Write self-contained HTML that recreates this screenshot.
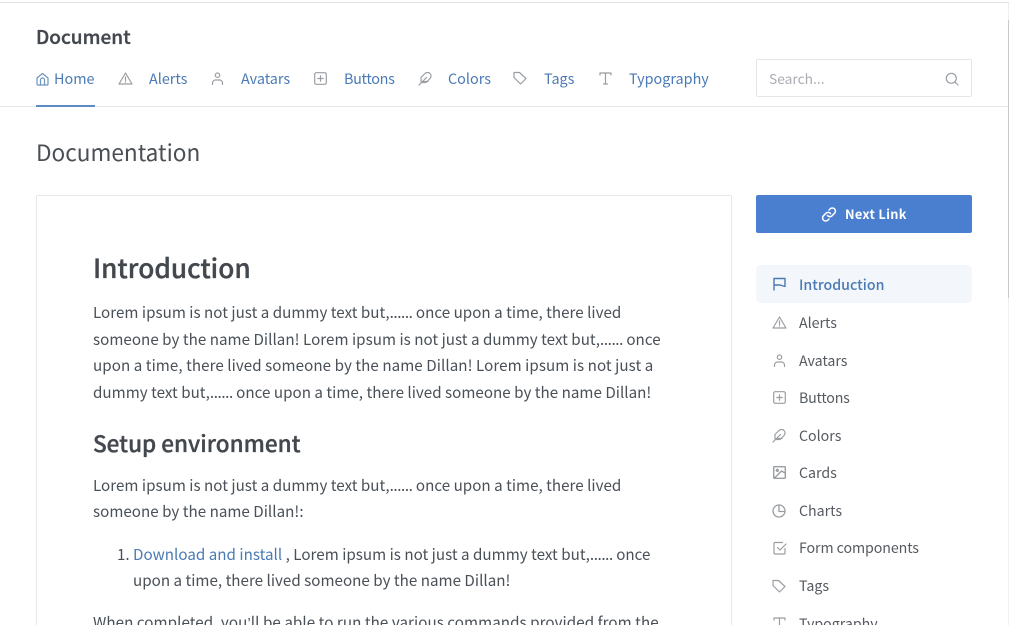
<!DOCTYPE html>
<html style="height:625px;overflow:hidden"><head><meta charset="utf-8"><style>
html,body{margin:0;padding:0;background:#fff;}
body{width:1009px;height:625px;overflow:hidden;position:relative;font-family:"Noto Sans CJK SC","Liberation Sans",sans-serif;color:#4a4f55;}
#w{position:absolute;left:0;top:0;width:1009px;height:625px;overflow:hidden;}
.t{position:absolute;white-space:nowrap;line-height:24px;height:24px;}
.b{font-size:15.15px;color:#495057;letter-spacing:.03px;}
.d{letter-spacing:-.4px;}
.n{font-size:14.4px;color:#4a7ab5;}
.s{font-size:14.2px;color:#555a60;}
.h{-webkit-text-stroke:.35px currentColor;}
svg{position:absolute;fill:none;stroke:#9a9ea3;stroke-width:1.2;stroke-linecap:round;stroke-linejoin:round;}
.r{position:absolute;}
</style></head><body><div id="w">
<div class="r" style="left:0;top:2px;width:1009px;height:1px;background:#e3e3e3"></div>
<div class="r" style="left:0;top:106px;width:1008px;height:1px;background:#e6e8ea"></div>
<div class="r" style="left:36px;top:105px;width:59px;height:2px;background:#5b8bc0"></div>
<div class="r" style="left:1008px;top:3px;width:1px;height:622px;background:#efefef"></div>
<div class="r" style="left:1008px;top:20px;width:1px;height:278px;background:#c8c8c8"></div>

<div class="t h" style="left:36px;top:25px;font-size:19px;font-weight:500;color:#43484e">Document</div>

<svg style="left:36px;top:72px;stroke:#6f94bd" width="13" height="14" viewBox="0 0 13 14"><path d="M1 6l5.500-4.500L12 6v6a1 1 0 0 1-1 1H2a1 1 0 0 1-1-1z"/><path d="M4.500 13V8a2 2 0 0 1 4 0v5"/></svg>
<div class="t n" style="left:54px;top:67px">Home</div>
<svg style="left:118px;top:72px" width="15" height="13" viewBox="0 0 15 13"><path d="M7.500 1L14 12H1z"/><path d="M7.500 5v3.500M7.500 10v.3"/></svg>
<div class="t n" style="left:149px;top:67px">Alerts</div>
<svg style="left:211px;top:72px" width="13" height="13" viewBox="0 0 13 13"><circle cx="6.500" cy="3.200" r="2.200"/><path d="M1.500 12.500v-1.500a3 3 0 0 1 3-3h4a3 3 0 0 1 3 3v1.500"/></svg>
<div class="t n" style="left:241px;top:67px">Avatars</div>
<svg style="left:314px;top:72px" width="13" height="13" viewBox="0 0 13 13"><rect x=".7" y=".7" width="11.600" height="11.600" rx="1.500"/><path d="M6.500 3.800v5.400M3.800 6.500h5.400"/></svg>
<div class="t n" style="left:344px;top:67px;letter-spacing:-.32px">Buttons</div>
<svg style="left:418px;top:72px" width="14" height="14" viewBox="0 0 14 14"><path d="M12 6.500a3.500 3.500 0 0 0-5-5L3 5.500V10.500h5zM1 13L8.500 5.500M5 9.500h5"/></svg>
<div class="t n" style="left:448px;top:67px">Colors</div>
<svg style="left:513px;top:71px" width="14" height="14" viewBox="0 0 14 14"><path d="M1 1.500h5.500L13 7.500 7.500 13 1 6.500z"/></svg>
<div class="t n" style="left:544px;top:67px">Tags</div>
<svg style="left:599px;top:72px" width="13" height="13" viewBox="0 0 13 13"><path d="M1 3V1h11v2M6.500 1v11M4.500 12h4"/></svg>
<div class="t n" style="left:629px;top:67px">Typography</div>

<div class="r" style="left:756px;top:59px;width:214px;height:36px;border:1px solid #e4e6e8;border-radius:2px"></div>
<div class="t" style="left:769px;top:66px;font-size:13.8px;color:#a9adb2">Search...</div>
<svg style="left:945px;top:72px" width="14" height="14" viewBox="0 0 14 14"><circle cx="6.300" cy="6.300" r="5"/><path d="M10 10l3 3"/></svg>

<div class="t" style="left:36px;top:137px;height:30px;line-height:30px;font-size:22.6px;color:#4a4f55">Documentation</div>

<div class="r" style="left:36px;top:195px;width:694px;height:440px;border:1px solid #e6e8ea;border-radius:2px"></div>

<div class="t h" style="left:93px;top:249px;height:36px;line-height:36px;font-size:26.2px;font-weight:500;color:#43484e">Introduction</div>
<div class="t b" style="left:93px;top:300px">Lorem ipsum is not just a dummy text but,<span class="d">......</span> once upon a time, there lived</div>
<div class="t b" style="left:93px;top:327px;letter-spacing:.04px">someone by the name Dillan! Lorem ipsum is not just a dummy text but,<span class="d">......</span> once</div>
<div class="t b" style="left:93px;top:353px;letter-spacing:.07px">upon a time, there lived someone by the name Dillan! Lorem ipsum is not just a</div>
<div class="t b" style="left:93px;top:380px">dummy text but,<span class="d">......</span> once upon a time, there lived someone by the name Dillan!</div>
<div class="t h" style="left:93px;top:427px;height:32px;line-height:32px;font-size:22.5px;font-weight:500;color:#43484e">Setup environment</div>
<div class="t b" style="left:93px;top:473px">Lorem ipsum is not just a dummy text but,<span class="d">......</span> once upon a time, there lived</div>
<div class="t b" style="left:93px;top:499px">someone by the name Dillan!:</div>
<div class="t b" style="left:117px;top:542px">1.</div>
<div class="t b" style="left:133px;top:542px"><span style="color:#4a7ab5">Download and install</span> , Lorem ipsum is not just a dummy text but,<span class="d">......</span> once</div>
<div class="t b" style="left:133px;top:568px;letter-spacing:.03px">upon a time, there lived someone by the name Dillan!</div>
<div class="t b" style="left:93px;top:610px;letter-spacing:.07px">When completed, you<span style="font-family:'Liberation Sans',sans-serif">’</span>ll be able to run the various commands provided from the</div>

<div class="r" style="left:756px;top:195px;width:216px;height:38px;background:#4a7fd0;border-radius:2px"></div>
<svg style="left:821px;top:207px;stroke:#fff;stroke-width:1.500" width="16" height="15" viewBox="0 0 16 15"><path d="M6.500 8.500a3 3 0 0 0 4.500.3l2.500-2.500a3.100 3.100 0 0 0-4.400-4.400L8 3"/><path d="M9.500 6.500a3 3 0 0 0-4.500-.3L2.500 8.700a3.100 3.100 0 0 0 4.400 4.400L8 12"/></svg>
<div class="t" style="left:845px;top:202px;font-size:12.8px;font-weight:700;letter-spacing:.3px;color:#fff">Next Link</div>

<div class="r" style="left:756px;top:265px;width:216px;height:38px;background:#f3f6fa;border-radius:4px"></div>
<svg style="left:773px;top:277px;stroke:#4a7ab5;stroke-width:1.400" width="13" height="14" viewBox="0 0 13 14"><path d="M1 13V1.500h11v8L7 8H1"/></svg>
<div class="t" style="left:799px;top:273px;font-size:14.2px;font-weight:500;color:#4a7ab5">Introduction</div>

<svg style="left:772px;top:316px" width="15" height="13" viewBox="0 0 15 13"><path d="M7.500 1L14 12H1z"/><path d="M7.500 5v3.500M7.500 10v.3"/></svg>
<div class="t s" style="left:799px;top:311px">Alerts</div>
<svg style="left:773px;top:354px" width="13" height="13" viewBox="0 0 13 13"><circle cx="6.500" cy="3.200" r="2.200"/><path d="M1.500 12.500v-1.500a3 3 0 0 1 3-3h4a3 3 0 0 1 3 3v1.500"/></svg>
<div class="t s" style="left:799px;top:349px">Avatars</div>
<svg style="left:773px;top:391px" width="13" height="13" viewBox="0 0 13 13"><rect x=".7" y=".7" width="11.600" height="11.600" rx="1.500"/><path d="M6.500 3.800v5.400M3.800 6.500h5.400"/></svg>
<div class="t s" style="left:799px;top:386px;letter-spacing:-.2px">Buttons</div>
<svg style="left:772px;top:429px" width="14" height="14" viewBox="0 0 14 14"><path d="M12 6.500a3.500 3.500 0 0 0-5-5L3 5.500V10.500h5zM1 13L8.500 5.500M5 9.500h5"/></svg>
<div class="t s" style="left:799px;top:424px">Colors</div>
<svg style="left:773px;top:466px;stroke-width:1.400" width="13" height="13" viewBox="0 0 13 13"><rect x=".7" y=".7" width="11.600" height="11.600" rx=".5"/><circle cx="4.300" cy="4.300" r="1"/><path d="M12 7L8.500 5 1.500 12"/></svg>
<div class="t s" style="left:799px;top:461px">Cards</div>
<svg style="left:772px;top:504px;stroke-width:1.300" width="14" height="14" viewBox="0 0 14 14"><path d="M7 1a6 6 0 1 0 6 6.500"/><path d="M7 1v6.500h6A6 6 0 0 0 7 1z"/></svg>
<div class="t s" style="left:799px;top:499px">Charts</div>
<svg style="left:773px;top:541px" width="14" height="14" viewBox="0 0 14 14"><path d="M12 7.500V12a1 1 0 0 1-1 1H2a1 1 0 0 1-1-1V2.500a1 1 0 0 1 1-1h7.500"/><path d="M4.500 6.500L7 9l6-6"/></svg>
<div class="t s" style="left:799px;top:536px;letter-spacing:-.08px">Form components</div>
<svg style="left:772px;top:579px" width="14" height="14" viewBox="0 0 14 14"><path d="M1 1.500h5.500L13 7.500 7.500 13 1 6.500z"/></svg>
<div class="t s" style="left:799px;top:574px">Tags</div>
<svg style="left:773px;top:617px" width="13" height="13" viewBox="0 0 13 13"><path d="M1 3V1h11v2M6.500 1v11M4.500 12h4"/></svg>
<div class="t s" style="left:799px;top:612px">Typography</div>
</div></body></html>
